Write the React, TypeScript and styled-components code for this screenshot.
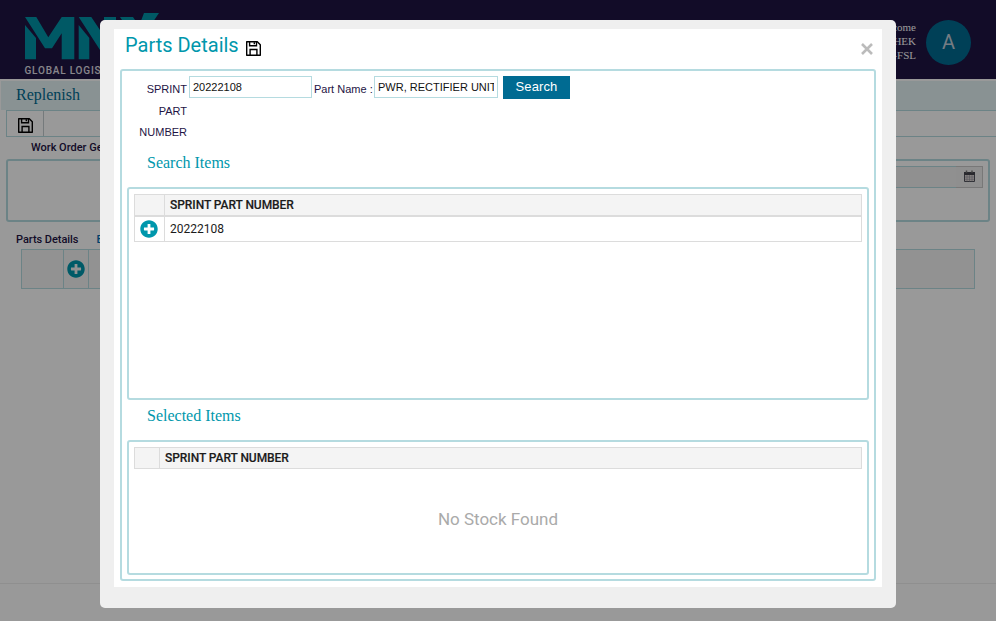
import React from "react";
import styled, { createGlobalStyle } from "styled-components";
import { FaPlusCircle } from "react-icons/fa";

const GlobalStyle = createGlobalStyle`
  * { box-sizing: border-box; }
  html, body { margin: 0; height: 621px; overflow: hidden; background: #fff; }
  body { font-family: Roboto, sans-serif; }
`;

const Page = styled.div`
  height: 621px;
  display: flex;
  flex-direction: column;
`;

const Header = styled.header`
  flex: none;
  height: 79px;
  background: #1e1444;
  display: flex;
  justify-content: space-between;
  padding: 13px 25px 0 24px;
`;

const Brand = styled.div`
  display: flex;
  flex-direction: column;
  width: 140px;
`;

const BrandTagline = styled.div`
  font: 500 10px/12px Roboto, sans-serif;
  letter-spacing: 0.8px;
  color: #e2e0e8;
  white-space: nowrap;
  margin: 5px 0 0 0.5px;
`;

const Account = styled.div`
  display: flex;
  gap: 10px;
  padding-top: 7px;
`;

const Welcome = styled.div`
  font: 11px/14px "Liberation Serif", serif;
  color: #fff;
  text-align: right;
`;

const Avatar = styled.div`
  width: 45px;
  height: 45px;
  border-radius: 50%;
  background: #006b92;
  color: #c3cfdb;
  font: 20px/45px Roboto, sans-serif;
  text-align: center;
`;

const PageTitle = styled.h1`
  flex: none;
  margin: 2px 0 0 1px;
  height: 29px;
  padding-left: 15px;
  background: #e4f3f5;
  color: #006b92;
  font: 16px/27px "Liberation Serif", serif;
`;

const Toolbar = styled.div`
  flex: none;
  height: 27px;
  margin-left: 6px;
  border: 1px solid #b5dbe0;
  border-right: 0;
`;

const ToolButton = styled.div`
  width: 37px;
  height: 25px;
  border-right: 1px solid #c4cccf;
  padding: 7px 0 0 11px;
`;

const FieldLabel = styled.div`
  margin: 4px 0 0 31px;
  font: 500 11px/14px Roboto, sans-serif;
  color: #1e1444;
`;

const OrderPanel = styled.div`
  flex: none;
  height: 63px;
  margin: 4px 6px 0;
  border: 2px solid #b5dbe0;
  border-radius: 3px;
  display: flex;
  justify-content: flex-end;
  padding: 5px 5px 0;
`;

const DateField = styled.div`
  width: 180px;
  height: 22px;
  border: 1px solid #b5dbe0;
  border-right: 0;
  background: #f0f0f0;
`;

const DateButton = styled.div`
  width: 27px;
  height: 22px;
  border: 1px solid #c8c8c8;
  border-left: 0;
  background: #efefef;
  padding: 3px 0 0 8px;
`;

const Tabs = styled.div`
  display: flex;
  gap: 18px;
  margin: 11px 0 0 16px;
  font: 500 11px/14px Roboto, sans-serif;
  letter-spacing: -0.05px;
  color: #1e1444;
`;

const TabLink = styled.span`
  color: #006bb2;
`;

const PartsTable = styled.div`
  flex: none;
  height: 40px;
  margin: 2px 21px 0;
  border: 1px solid #b5dbe0;
  background: #f4f4f4;
  display: grid;
  grid-template-columns: 42px 25px 1fr;
`;

const PartsCell = styled.div`
  border-right: 1px solid #b5dbe0;
  display: flex;
  align-items: center;
  justify-content: center;
`;

const Footer = styled.footer`
  margin-top: auto;
  height: 38px;
  border-top: 1px solid #eee;
`;

const Overlay = styled.div`
  position: fixed;
  inset: 0;
  background: rgba(0, 0, 0, 0.4);
  display: flex;
  justify-content: center;
  align-items: flex-start;
  padding-top: 20px;
`;

const Dialog = styled.div`
  width: 796px;
  height: 588px;
  border-radius: 5px;
  background: #efefef;
  padding: 9px 14px 21px;
`;

const DialogBody = styled.div`
  height: 558px;
  background: #fff;
  padding: 0 6px;
`;

const DialogHeader = styled.div`
  height: 40px;
  display: flex;
  padding: 0 3px 0 5px;
`;

const DialogTitle = styled.h2`
  margin: 0;
  width: 121px;
  font: 20px/32px Roboto, sans-serif;
  color: #0097ac;
  white-space: nowrap;
`;

const SaveSlot = styled.div`
  padding-top: 12px;
`;

const CloseButton = styled.button`
  margin-left: auto;
  padding: 2px 0 0;
  border: 0;
  background: none;
  width: 12px;
  height: 40px;
`;

const Frame = styled.section`
  height: 512px;
  border: 2px solid #b5dbe0;
  border-radius: 3px;
  padding: 5px 5px 0;
`;

const SearchForm = styled.div`
  height: 70px;
  display: flex;
  align-items: flex-start;
`;

const FormLabel = styled.label<{ $width: number; $line: number; $nowrap?: boolean }>`
  flex: none;
  width: ${(p) => p.$width}px;
  padding-top: 3px;
  margin-right: 2px;
  text-align: right;
  white-space: ${(p) => (p.$nowrap ? "nowrap" : "normal")};
  font: 11px/${(p) => p.$line}px "Liberation Sans", sans-serif;
  color: #1e1444;
`;

const TextInput = styled.input<{ $width: number }>`
  width: ${(p) => p.$width}px;
  height: 22px;
  border: 1px solid #b5dbe0;
  padding: 0 3px;
  margin: 0 2px 0 0;
  background: #fff;
  font: 11px "Liberation Sans", sans-serif;
  color: #111;
  outline: none;
`;

const SearchButton = styled.button`
  width: 67px;
  height: 23px;
  margin-left: 3px;
  border: 0;
  padding: 0 0 2px;
  background: #006b92;
  color: #fff;
  font: 13px "Liberation Sans", sans-serif;
  letter-spacing: 0.1px;
`;

const SectionTitle = styled.h3<{ $height: number; $line: number }>`
  margin: 0;
  padding-left: 20px;
  height: ${(p) => p.$height}px;
  font: 16px/${(p) => p.$line}px "Liberation Serif", serif;
  color: #0097ac;
`;

const GridPanel = styled.div<{ $height: number }>`
  height: ${(p) => p.$height}px;
  border: 2px solid #b5dbe0;
  border-radius: 3px;
  padding: 5px;
`;

const Row = styled.div<{ $first: number; $height: number; $head?: boolean }>`
  display: grid;
  grid-template-columns: ${(p) => p.$first}px 1fr;
  height: ${(p) => p.$height}px;
  border: 1px solid #dcdcdc;
  background: ${(p) => (p.$head ? "#f4f4f4" : "#fff")};
  color: #1b1b1b;
  font: ${(p) => (p.$head ? 500 : 400)} 12px/${(p) => (p.$head ? 21 : 24)}px Roboto, sans-serif;
  letter-spacing: ${(p) => (p.$head ? "-0.06px" : "0")};
  -webkit-text-stroke: ${(p) => (p.$head ? "0.15px #1b1b1b" : "0")};
`;

const Cell = styled.div`
  padding-left: 5px;
`;

const IconCell = styled.div`
  border-right: 1px solid #dcdcdc;
  display: flex;
  align-items: center;
  padding-left: 5px;
`;

const EmptyNote = styled.div`
  margin-top: 38px;
  text-align: center;
  font: 17px/24px Roboto, sans-serif;
  color: #aaa;
`;

const SaveIcon = () => (
  <svg width="15" height="15" viewBox="0 0 15 15" fill="none" stroke="#000" strokeWidth="1.4" display="block">
    <path d="M.7.7h10.6l3 3v10.6H.7z" strokeLinejoin="round" />
    <path d="M3.6.7v4.1h6.9V.7M8.3 1.2v2.1M4.1 14.3V8.5h6.8v5.8" />
  </svg>
);

const CalendarIcon = () => (
  <svg width="11" height="13" viewBox="0 0 11 13" display="block">
    <path d="M.5 3.5h10v8h-10z" fill="#e0d7d4" stroke="#51525c" />
    <path d="M0 2h11v3H0z" fill="#45454e" />
    <path d="M2.5 .4v2.4M8 .4v2.4" stroke="#777" strokeWidth="1.5" />
    <path d="M1 7h9M1 9.3h9M3 5v6.5M5.5 5v6.5M8 5v6.5" stroke="#8d8f9a" strokeWidth=".6" />
  </svg>
);

const Logo = () => (
  <svg width="136" height="47" viewBox="0 0 136 47" fill="#0095a9" display="block">
    <path d="M1 12l11 13v21.3H1z" />
    <path d="M1 4h11.3l12 20.3L37.7 4h12.6v42.3H37.7v-26L28 35.3h-7z" />
    <path d="M54.7 12l10.6 13v21.3H54.7z" />
    <path d="M54.7 4h12.6L80 23V4h12v42.3H82z" />
    <path d="M96 4h13l6 9 5-13h15l-31 46H91l17-24z" />
  </svg>
);

export default function App() {
  return (
    <>
      <GlobalStyle />
      <Page>
        <Header>
          <Brand>
            <Logo />
            <BrandTagline>GLOBAL LOGISTICS</BrandTagline>
          </Brand>
          <Account>
            <Welcome>
              Welcome
              <br />
              ABHISHEK
              <br />
              MNX-FSL
            </Welcome>
            <Avatar>A</Avatar>
          </Account>
        </Header>
        <PageTitle>Replenish</PageTitle>
        <Toolbar>
          <ToolButton>
            <SaveIcon />
          </ToolButton>
        </Toolbar>
        <FieldLabel>Work Order Ge</FieldLabel>
        <OrderPanel>
          <DateField />
          <DateButton>
            <CalendarIcon />
          </DateButton>
        </OrderPanel>
        <Tabs>
          <span>Parts Details</span>
          <TabLink>E</TabLink>
        </Tabs>
        <PartsTable>
          <PartsCell />
          <PartsCell>
            <FaPlusCircle size={18} color="#0097ac" />
          </PartsCell>
        </PartsTable>
        <Footer />
      </Page>
      <Overlay>
        <Dialog role="dialog">
          <DialogBody>
            <DialogHeader>
              <DialogTitle>Parts Details</DialogTitle>
              <SaveSlot>
                <SaveIcon />
              </SaveSlot>
              <CloseButton aria-label="Close">
                <svg width="12" height="12" viewBox="0 0 12 12" stroke="#bbb" strokeWidth="2.6">
                  <path d="M1 1l10 10M11 1L1 11" />
                </svg>
              </CloseButton>
            </DialogHeader>
            <Frame>
              <SearchForm>
                <FormLabel $width={60} $line={21.5}>
                  SPRINT PART NUMBER
                </FormLabel>
                <TextInput $width={123} defaultValue="20222108" />
                <FormLabel $width={58} $line={20} $nowrap>
                  Part Name :
                </FormLabel>
                <TextInput $width={124} defaultValue="PWR, RECTIFIER UNIT" />
                <SearchButton>Search</SearchButton>
              </SearchForm>
              <SectionTitle $height={41} $line={34}>Search Items</SectionTitle>
              <GridPanel $height={213}>
                <Row $head $first={30} $height={22}>
                  <IconCell />
                  <Cell>SPRINT PART NUMBER</Cell>
                </Row>
                <Row $first={30} $height={26}>
                  <IconCell>
                    <FaPlusCircle size={18} color="#0097ac" />
                  </IconCell>
                  <Cell>20222108</Cell>
                </Row>
              </GridPanel>
              <SectionTitle $height={40} $line={32}>Selected Items</SectionTitle>
              <GridPanel $height={135}>
                <Row $head $first={25} $height={22}>
                  <IconCell />
                  <Cell>SPRINT PART NUMBER</Cell>
                </Row>
                <EmptyNote>No Stock Found</EmptyNote>
              </GridPanel>
            </Frame>
          </DialogBody>
        </Dialog>
      </Overlay>
    </>
  );
}
